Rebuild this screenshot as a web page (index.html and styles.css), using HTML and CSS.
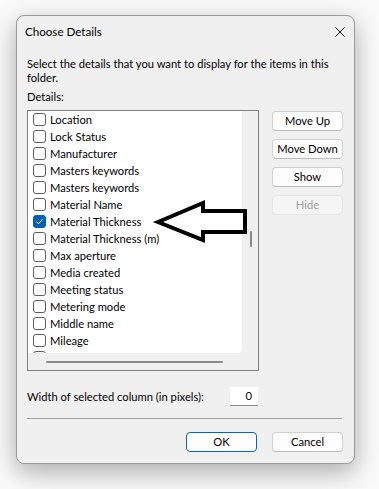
FILE: index.html
```html
<!DOCTYPE html>
<html>
<head>
<meta charset="utf-8">
<link rel="stylesheet" href="styles.css">
</head>
<body>
<div class="dialog">
  <div class="titlebar">
    <span class="title">Choose Details</span>
    <svg class="close" width="10" height="10" viewBox="0 0 10 10"><path d="M0.5 0.5 L9.5 9.5 M9.5 0.5 L0.5 9.5" stroke="#1a1a1a" stroke-width="1" fill="none"/></svg>
  </div>
  <div class="body">
    <p class="desc">Select the details that you want to display for the items in this folder.</p>
    <p class="label">Details:</p>
    <div class="main">
      <div class="listbox">
        <div class="listarea">
          <ul class="items">
            <li><span class="cb"></span>Location</li>
            <li><span class="cb"></span>Lock Status</li>
            <li><span class="cb"></span>Manufacturer</li>
            <li><span class="cb"></span>Masters keywords</li>
            <li><span class="cb"></span>Masters keywords</li>
            <li><span class="cb"></span>Material Name</li>
            <li><span class="cb checked"><svg width="13" height="13" viewBox="0 0 13 13"><path d="M3.5 6.8 L5.5 8.8 L9.5 4.3" stroke="#fff" stroke-width="1" fill="none"/></svg></span>Material Thickness</li>
            <li><span class="cb"></span>Material Thickness (m)</li>
            <li><span class="cb"></span>Max aperture</li>
            <li><span class="cb"></span>Media created</li>
            <li><span class="cb"></span>Meeting status</li>
            <li><span class="cb"></span>Metering mode</li>
            <li><span class="cb"></span>Middle name</li>
            <li><span class="cb"></span>Mileage</li>
            <li><span class="cb"></span></li>
          </ul>
          <div class="vscroll"><span class="vthumb"></span></div>
        </div>
        <div class="hscroll"><span class="hthumb"></span></div>
      </div>
      <div class="side">
        <button class="btn">Move Up</button>
        <button class="btn">Move Down</button>
        <button class="btn">Show</button>
        <button class="btn disabled">Hide</button>
      </div>
    </div>
    <div class="widthrow">
      <span>Width of selected column (in pixels):</span>
      <span class="input">0</span>
    </div>
    <div class="sep"></div>
    <div class="footer">
      <button class="btn primary">OK</button>
      <button class="btn">Cancel</button>
    </div>
  </div>
  <svg class="arrow" width="110" height="60" viewBox="0 0 110 60"><path d="M8 27 L53 8 L53 16 L95 16 L95 37 L53 37 L53 45 Z" fill="#fff" stroke="#000" stroke-width="4" stroke-linejoin="miter"/></svg>
</div>
</body>
</html>
```

FILE: styles.css
```css
* { box-sizing: border-box; }
html, body { margin: 0; padding: 0; background: #fafafa; }
body {
  width: 379px;
  height: 489px;
  overflow: hidden;
  font-family: "Segoe UI", Lato, sans-serif;
  font-size: 11.2px;
  color: #000;
}
.dialog {
  position: relative;
  margin: 15px 0 0 16px;
  width: 339px;
  height: 449px;
  background: #f0f0f0;
  border: 1px solid #9b9b9b;
  border-radius: 8px;
  box-shadow: 0 8px 26px rgba(0,0,0,0.32);
}
.titlebar {
  height: 32px;
  display: flex;
  align-items: center;
  justify-content: space-between;
  padding: 0 9px 1px 8px;
}
.title { font-size: 11.6px; }
.close { display: block; margin-top: 1px; }
.body { padding: 0 11px 0 10px; }
.desc { margin: 9px 0 0; line-height: 14px; }
.label { margin: 5px 0 0; line-height: 14px; }
.main { display: flex; margin-top: 6px; }
.listbox {
  width: 232px;
  height: 261px;
  border: 1px solid #828282;
  background: #f0f0f0;
  display: flex;
  flex-direction: column;
}
.listarea { display: flex; height: 242px; }
.items {
  list-style: none;
  margin: 0;
  padding: 0 0 0 5px;
  width: 214px;
  height: 242px;
  background: #fff;
  overflow: hidden;
  border-bottom-right-radius: 4px;
}
.items li {
  height: 17px;
  display: flex;
  align-items: center;
  white-space: nowrap;
}
.cb {
  width: 13px;
  height: 13px;
  border: 1px solid #5e5e5e;
  border-radius: 3px;
  background: #fff;
  margin-right: 4px;
  flex: none;
}
.cb.checked { background: #005fb8; border-color: #005fb8; }
.cb.checked svg { display: block; margin: -1px; }
.vscroll { flex: 1; display: flex; justify-content: center; padding-top: 120px; }
.vthumb { width: 2px; height: 16px; background: #8a8a8a; border-radius: 1px; margin-left: 1px; }
.hscroll { flex: 1; display: flex; align-items: center; padding-left: 18px; }
.hthumb { width: 177px; height: 2px; background: #8a8a8a; border-radius: 1px; margin-top: 0; }
.side {
  margin-left: 13px;
  padding-top: 1px;
  display: flex;
  flex-direction: column;
  gap: 8px;
}
.btn {
  width: 71px;
  height: 20px;
  padding: 0 0 1px;
  font: inherit;
  color: #000;
  background: #fdfdfd;
  border: 1px solid #d1d1d1;
  border-bottom-color: #bdbdbd;
  border-radius: 4px;
  line-height: 16px;
}
.btn.disabled { background: #f5f5f5; border-color: #e6e6e6; color: #9d9d9d; }
.btn.primary { border-color: #0067c0; }
.widthrow {
  display: flex;
  align-items: center;
  justify-content: space-between;
  margin-top: 16px;
  padding-right: 85px;
  height: 19px;
}
.input {
  width: 28px;
  height: 19px;
  background: #fff;
  border-bottom: 1px solid #8a8a8a;
  text-align: right;
  padding-right: 6px;
  line-height: 18px;
}
.sep { height: 1px; background: #a0a0a0; margin-top: 12px; margin-right: 1px; }
.footer {
  display: flex;
  justify-content: flex-end;
  gap: 15px;
  margin-top: 13px;
}
.arrow { position: absolute; left: 133px; top: 179px; }
```
